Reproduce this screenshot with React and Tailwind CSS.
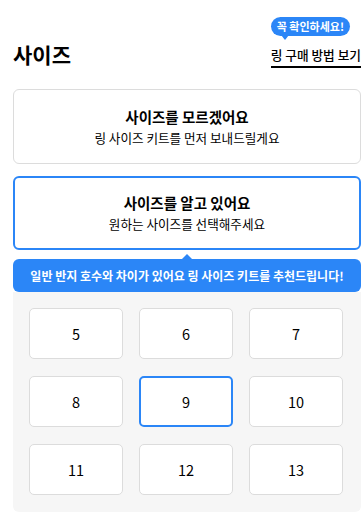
const FONT = { fontFamily: '"Noto Sans CJK KR", "Noto Sans", sans-serif' };

function OptionCard({ title, subtitle, selected }) {
  return (
    <button
      type="button"
      className={
        selected
          ? "flex h-[74px] w-full flex-col items-center justify-center rounded-[6px] border-2 border-[#2b86f7] bg-white"
          : "flex h-[75px] w-full flex-col items-center justify-center rounded-[6px] border border-[#dcdcdc] bg-white"
      }
    >
      <span className="text-[14.5px] font-bold leading-[19px] text-black">{title}</span>
      <span className="mt-[3px] text-[12.6px] leading-[18px] text-black">{subtitle}</span>
    </button>
  );
}

const sizes = [5, 6, 7, 8, 9, 10, 11, 12, 13];

export default function App() {
  const selected = 9;

  return (
    <div className="min-h-[531px] w-[363px] bg-white pl-[13px] pr-[2px]" style={FONT}>
      <div className="flex items-end justify-between pt-[17px]">
        <h1 className="mb-[1px] text-[21px] font-bold leading-[26px] text-black">사이즈</h1>
        <div className="flex flex-col items-start">
          <div className="relative h-[19px] rounded-full bg-[#2b86f7] px-[6px] text-[11px] font-bold leading-[19px] text-white">
            꼭 확인하세요!
            <span className="absolute left-[10px] top-[18px] h-0 w-0 border-x-[4px] border-t-[5px] border-x-transparent border-t-[#2b86f7]" />
          </div>
          <a href="#" className="mt-[10px] border-b-2 border-black pb-[2px] text-[12.7px] font-medium leading-[18px] text-black">
            링 구매 방법 보기
          </a>
        </div>
      </div>

      <div className="mt-[21px]">
        <OptionCard title="사이즈를 모르겠어요" subtitle="링 사이즈 키트를 먼저 보내드릴게요" />
      </div>
      <div className="mt-[12px]">
        <OptionCard title="사이즈를 알고 있어요" subtitle="원하는 사이즈를 선택해주세요" selected />
      </div>

      <div className="relative mt-[9px] flex h-[33px] items-center justify-center rounded-[6px] bg-[#2b86f7]">
        <span className="absolute left-1/2 top-[-5px] h-0 w-0 -translate-x-1/2 border-x-[5px] border-b-[5px] border-x-transparent border-b-[#2b86f7]" />
        <span className="whitespace-nowrap text-[12px] font-bold leading-[16px] text-white">
          일반 반지 호수와 차이가 있어요 링 사이즈 키트를 추천드립니다!
        </span>
      </div>

      <div className="grid grid-cols-3 gap-x-[16px] gap-y-[17px] rounded-b-[6px] bg-[#f6f6f6] pb-[17px] pl-[16px] pr-[18px] pt-[16px]">
        {sizes.map((s) => (
          <button
            key={s}
            type="button"
            className={
              s === selected
                ? "flex h-[51px] items-center justify-center rounded-[5px] border-2 border-[#2b86f7] bg-white text-[14.5px] text-black"
                : "flex h-[51px] items-center justify-center rounded-[5px] border border-[#dcdcdc] bg-white text-[14.5px] text-black"
            }
          >
            {s}
          </button>
        ))}
      </div>
    </div>
  );
}
